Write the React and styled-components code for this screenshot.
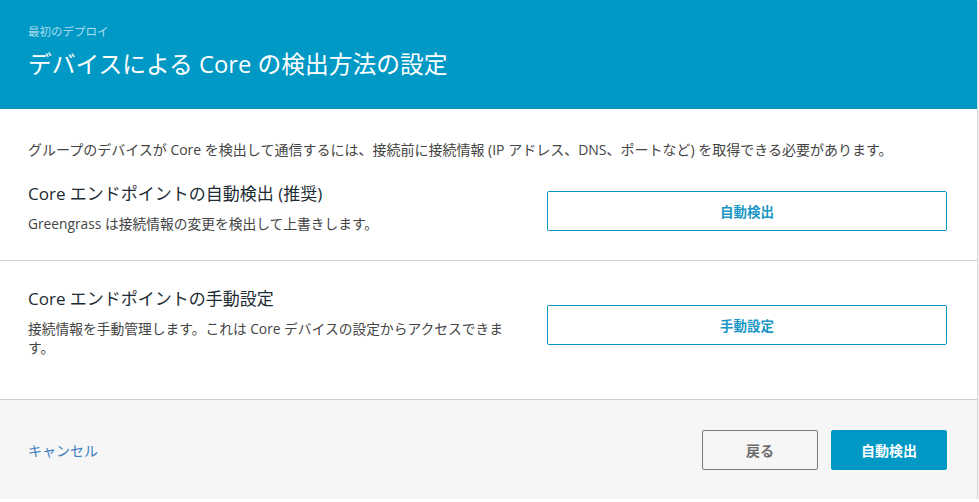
import React from "react";
import styled, { createGlobalStyle } from "styled-components";

const GlobalStyle = createGlobalStyle`
  body {
    margin: 0;
    background: #fff;
    font-family: "Open Sans", "Noto Sans CJK JP", sans-serif;
  }
`;

const Modal = styled.div`
  width: 978px;
  box-sizing: border-box;
  border-right: 1px solid #d9d9d9;
  box-shadow: 0 1px 2px rgba(0, 0, 0, 0.18);
`;

const Header = styled.header`
  height: 109px;
  box-sizing: border-box;
  background: #0099c5;
  border-bottom: 1px solid #0a8bb3;
  padding: 24px 28px 0;
  color: #fff;
`;

const Eyebrow = styled.div`
  font-size: 11.5px;
  line-height: 16px;
  color: #a9dcef;
`;

const Title = styled.h1`
  margin: 8px 0 0;
  font-size: 23.75px;
  font-weight: 400;
  line-height: 32px;
`;

const Section = styled.section`
  padding: ${(p) => p.$pad};
  border-bottom: 1px solid #cfcfcf;
`;

const Intro = styled.p`
  margin: 0 0 22px;
  font-size: 14px;
  line-height: 20px;
  color: #444;
`;

const Row = styled.div`
  display: grid;
  grid-template-columns: 1fr 400px;
  column-gap: 28px;
  align-items: center;
`;

const Info = styled.div`
  padding: 0 8px 6px 0;
`;

const Heading = styled.h2`
  margin: 0 0 8px;
  font-size: 17px;
  font-weight: 400;
  line-height: 24px;
  color: #1d2b33;
`;

const Desc = styled.p`
  margin: 0;
  font-size: 13.75px;
  line-height: 19px;
  color: #444;
`;

const OptionButton = styled.button`
  height: 40px;
  width: 100%;
  background: #fff;
  border: 1px solid #0a97c3;
  border-radius: 2px;
  color: #1a97c4;
  font-family: inherit;
  font-size: 13.5px;
  font-weight: 700;
  cursor: pointer;
`;

const Footer = styled.footer`
  display: flex;
  align-items: center;
  justify-content: space-between;
  background: #f6f6f6;
  padding: 30px 30px 29px 28px;
`;

const CancelLink = styled.a`
  font-size: 14px;
  color: #3d7fc1;
  text-decoration: none;
  cursor: pointer;
`;

const Actions = styled.div`
  display: flex;
  gap: 13px;
`;

const FooterButton = styled.button`
  width: 116px;
  height: 40px;
  border-radius: 2px;
  font-family: inherit;
  font-size: 14px;
  font-weight: 700;
  cursor: pointer;
  background: ${(p) => (p.$primary ? "#0099c5" : "#f6f6f6")};
  border: 1px solid ${(p) => (p.$primary ? "#0099c5" : "#7a7a7a")};
  color: ${(p) => (p.$primary ? "#fff" : "#6b6b6b")};
`;

export default function App() {
  return (
    <>
      <GlobalStyle />
      <Modal>
        <Header>
          <Eyebrow>最初のデプロイ</Eyebrow>
          <Title>デバイスによる Core の検出方法の設定</Title>
        </Header>
        <Section $pad="31px 30px 21px 28px">
          <Intro>
            グループのデバイスが Core を検出して通信するには、接続前に接続情報 (IP アドレス、DNS、ポートなど) を取得できる必要があります。
          </Intro>
          <Row>
            <Info>
              <Heading>Core エンドポイントの自動検出 (推奨)</Heading>
              <Desc>Greengrass は接続情報の変更を検出して上書きします。</Desc>
            </Info>
            <OptionButton>自動検出</OptionButton>
          </Row>
        </Section>
        <Section $pad="26px 30px 36px 28px">
          <Row>
            <Info>
              <Heading>Core エンドポイントの手動設定</Heading>
              <Desc>
                接続情報を手動管理します。これは Core デバイスの設定からアクセスできます。
              </Desc>
            </Info>
            <OptionButton>手動設定</OptionButton>
          </Row>
        </Section>
        <Footer>
          <CancelLink>キャンセル</CancelLink>
          <Actions>
            <FooterButton>戻る</FooterButton>
            <FooterButton $primary>自動検出</FooterButton>
          </Actions>
        </Footer>
      </Modal>
    </>
  );
}
